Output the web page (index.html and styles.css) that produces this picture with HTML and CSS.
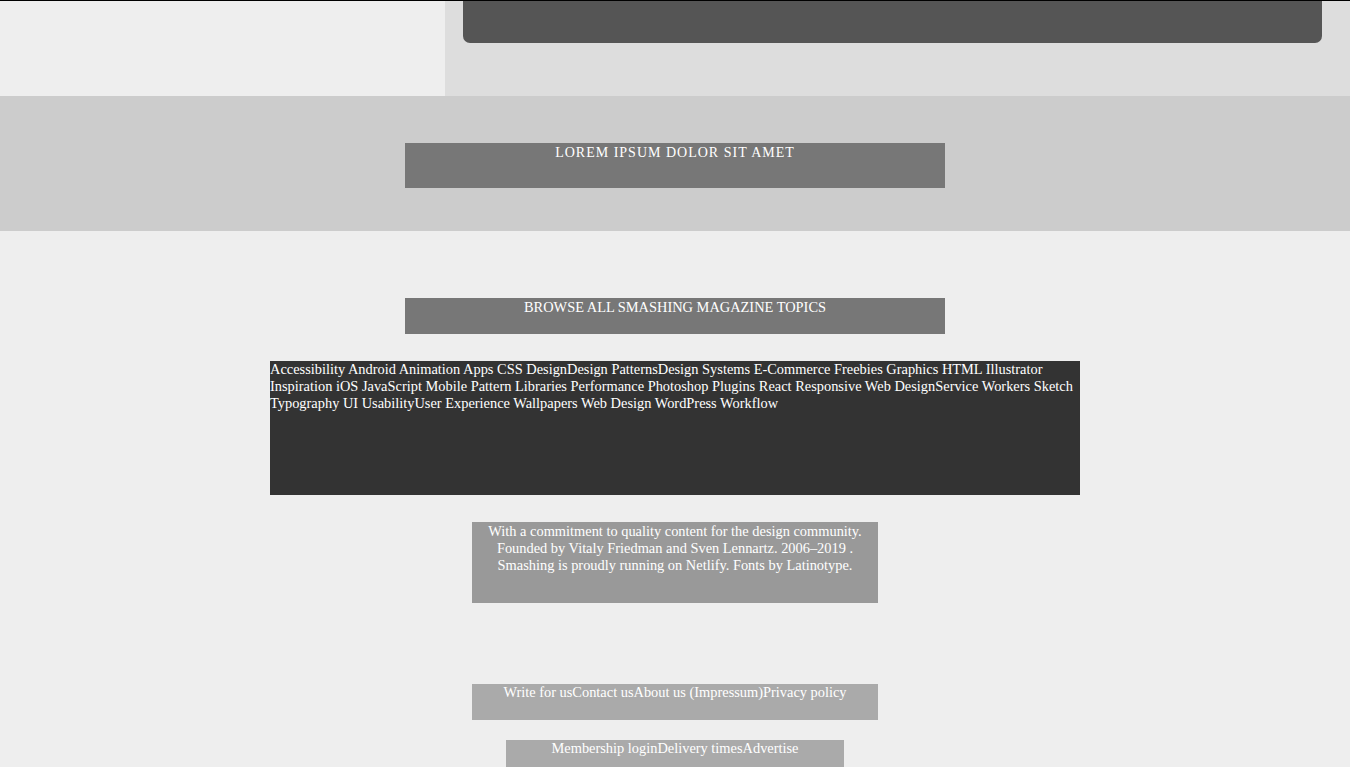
FILE: index.html
```html
<!DOCTYPE html>
<html lang="en">
<head>
<meta charset="utf-8">
<title>Smashing Magazine</title>
<link rel="stylesheet" href="styles.css">
</head>
<body>
<header class="top">
  <div class="top-left"></div>
  <div class="top-right"><div class="top-bar"></div></div>
</header>
<section class="band">
  <div class="band-box">LOREM IPSUM DOLOR SIT AMET</div>
</section>
<main class="main">
  <div class="browse">BROWSE ALL SMASHING MAGAZINE TOPICS</div>
  <div class="topics">Accessibility Android Animation Apps CSS DesignDesign PatternsDesign Systems E-Commerce Freebies Graphics HTML Illustrator Inspiration iOS JavaScript Mobile Pattern Libraries Performance Photoshop Plugins React Responsive Web DesignService Workers Sketch Typography UI UsabilityUser Experience Wallpapers Web Design WordPress Workflow</div>
  <div class="about">With a commitment to quality content for the design community.<br>Founded by Vitaly Friedman and Sven Lennartz. 2006–2019 .<br>Smashing is proudly running on Netlify. Fonts by Latinotype.</div>
  <div class="links">Write for usContact usAbout us (Impressum)Privacy policy</div>
  <div class="links links-small">Membership loginDelivery timesAdvertise</div>
</main>
</body>
</html>
```

FILE: styles.css
```css
html, body {
  margin: 0;
  padding: 0;
}
body {
  background: #eee;
  font-family: "Liberation Serif", "Times New Roman", serif;
  font-size: 14.4px;
  color: #fff;
}
.top {
  display: flex;
  height: 95px;
  border-top: 1px solid #000;
}
.top-left {
  width: 445px;
  background: #eee;
}
.top-right {
  flex: 1;
  background: #ddd;
  padding: 0 28px 0 18px;
}
.top-bar {
  height: 42px;
  background: #555;
  border-radius: 0 0 7px 7px;
}
.band {
  background: #ccc;
  height: 135px;
  padding-top: 47px;
  box-sizing: border-box;
}
.band-box {
  width: 540px;
  height: 45px;
  margin: 0 auto;
  background: #777;
  text-align: center;
  font-size: 14px;
  letter-spacing: 1px;
  line-height: 18px;
  padding-top: 1px;
  box-sizing: border-box;
}
.main {
  display: flex;
  flex-direction: column;
  align-items: center;
  padding-top: 67px;
}
.browse {
  width: 540px;
  height: 36px;
  background: #777;
  text-align: center;
  line-height: 17px;
  padding-top: 1px;
  box-sizing: border-box;
}
.topics {
  width: 810px;
  height: 134px;
  margin-top: 27px;
  background: #333;
  line-height: 17px;
}
.about {
  width: 406px;
  height: 81px;
  margin-top: 27px;
  background: #999;
  text-align: center;
  line-height: 17px;
  padding-top: 1px;
  box-sizing: border-box;
}
.links {
  width: 406px;
  height: 36px;
  margin-top: 81px;
  background: #aaa;
  text-align: center;
  line-height: 17px;
}
.links-small {
  width: 338px;
  margin-top: 20px;
}
```
